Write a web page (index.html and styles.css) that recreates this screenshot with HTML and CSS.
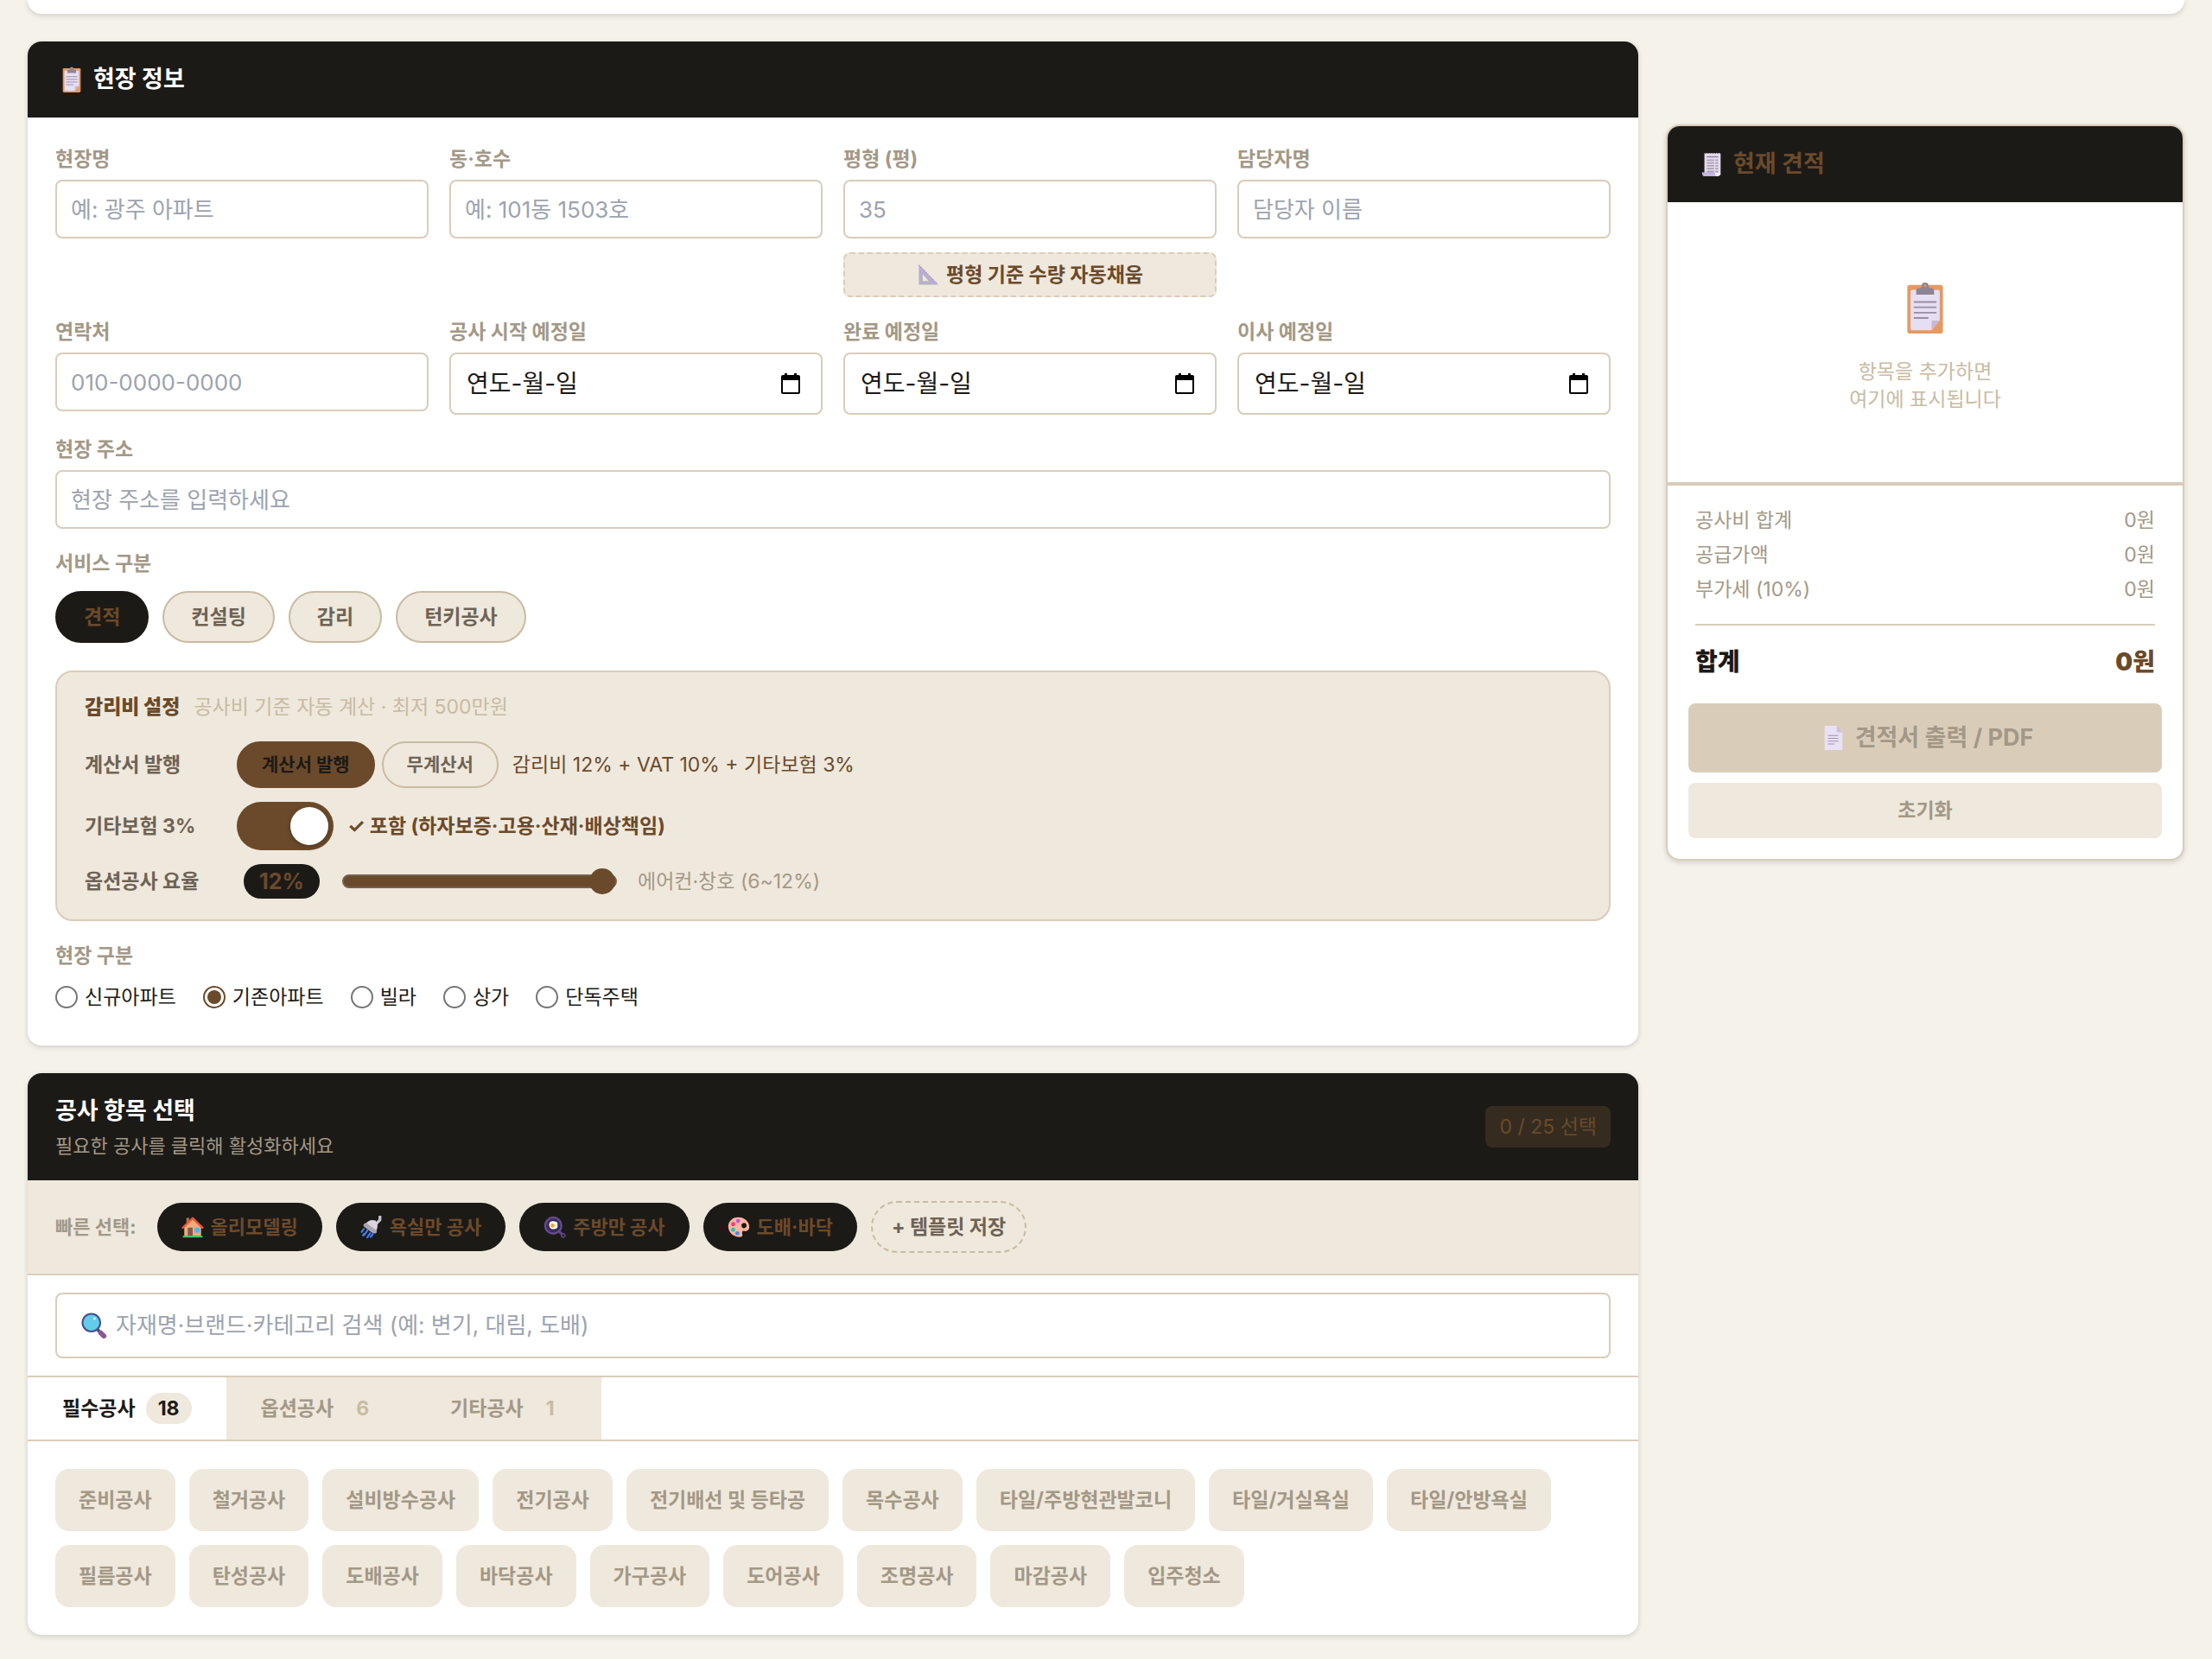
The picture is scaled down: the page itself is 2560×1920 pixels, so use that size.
FILE: index.html
```html
<!DOCTYPE html>
<html lang="ko">

<head>
    <meta charset="UTF-8" />
    <meta name="viewport" content="width=device-width, initial-scale=1.0" />
    <title>현장 견적</title>
    <link rel="stylesheet" href="styles.css">
</head>

<body>
    <!-- shared icons -->
    <svg class="icon-defs" aria-hidden="true">
        <symbol id="i-clipboard" viewBox="0 0 32 32">
            <rect x="5" y="2" width="22" height="30" rx="1.5" fill="#e59a62" />
            <path d="M7 6a1 1 0 0 1 1-1h16a1 1 0 0 1 1 1v18l-5 6H8a1 1 0 0 1-1-1z" fill="#e6def2" />
            <path d="M20 24h5l-5 6z" fill="#c5b9d3" />
            <path d="M10.500 8V5.500q0-1 1-1.500h1.500q1-.5 1-2t2-1.500 2 1.500 1 2h1.500q1 .5 1 1.500V8z" fill="#8d8494" />
            <circle cx="16" cy="2.500" r=".8" fill="#e59a62" />
            <path d="M9 12.500h14M9 15.800h14M9 19.100h14M9 22.400h9" stroke="#998da3" stroke-width="1" />
        </symbol>
        <symbol id="i-receipt" viewBox="0 0 32 32">
            <path d="M7 2l1.500 1 1.500-1 1.500 1L13 2l1.500 1L16 2l1.500 1L19 2l1.500 1L22 2l1.500 1L25 2l2 1v26l-3 2H10L7 27z" fill="#e4dcee" />
            <path d="M4 26h17v3q0 2 2 2H8q-4 0-4-5z" fill="#c5b5e0" />
            <path d="M20 26q0 5 3 5 3.500-.5 4-4z" fill="#f1ecf8" />
            <path d="M10 7h14" stroke="#8f8699" stroke-width="1.600" />
            <path d="M10 11h9M20.500 11H24M10 14.500h9M20.500 14.500H24M10 18h9M20.500 18H24M10 21.500h9M20.500 21.500H24M10 25h9M20.500 25H24" stroke="#aaa1b3" stroke-width="2" />
        </symbol>
        <symbol id="i-ruler" viewBox="0 0 32 32">
            <path fill-rule="evenodd" d="M3 2l27 28H3zM8.500 15.500V25H17z" fill="#b8b0ca" />
            <path d="M3 2l27 28" stroke="#9d86dc" stroke-width="1.500" stroke-dasharray="2 1.500" />
        </symbol>
        <symbol id="i-page" viewBox="0 0 32 32">
            <path d="M5 2a1 1 0 0 1 1-1h14l7 8v21a1 1 0 0 1-1 1H6a1 1 0 0 1-1-1z" fill="#e9e1f4" />
            <path d="M20 1l7 8h-6a1 1 0 0 1-1-1z" fill="#cbc0d8" />
            <path d="M9 13h13M9 16.500h13M9 20h13M9 23.500h8" stroke="#a094ad" stroke-width="1.200" />
        </symbol>
        <symbol id="i-house" viewBox="0 0 32 32">
            <path d="M7 3h4v9H7z" fill="#a5744e" />
            <path d="M4 15L16 4l12 11v14H4z" fill="#e9ae79" />
            <path d="M2 17L16 3.500 30 17" fill="none" stroke="#ee5638" stroke-width="3" stroke-linecap="round" stroke-linejoin="round" />
            <path d="M9 17h7v12H9z" fill="#81594c" />
            <rect x="19" y="17" width="7" height="7" fill="#4bb7f1" />
            <path d="M2 28.500h28V31H2z" fill="#45c867" />
        </symbol>
        <symbol id="i-shower" viewBox="0 0 32 32">
            <path d="M22 12l6-6V1" fill="none" stroke="#c9c3ce" stroke-width="4" stroke-linejoin="round" stroke-linecap="round" />
            <path d="M7 12q6-8 15-5 5 7 0 16z" fill="#d9d4dd" />
            <path d="M5 12q2-3 6 0l11 8q3 3 0 5-3 1-7-2l-8-6q-4-3-2-5z" fill="#aaa3b0" />
            <path d="M5 19l-3 4M10 21l-4 6M14 25l-4 6M5 26l-1 2M18 26l-3 4" stroke="#3e7df2" stroke-width="2.800" stroke-linecap="round" />
        </symbol>
        <symbol id="i-pan" viewBox="0 0 32 32">
            <path d="M22 22l5 5" stroke="#5c4485" stroke-width="4" />
            <circle cx="14" cy="14" r="13" fill="#644b8c" />
            <circle cx="14" cy="14" r="10" fill="#3c2b58" />
            <path d="M8 12q1-5 7-4 6 0 5 5 1 6-5 6-7 1-7-7z" fill="#fff" />
            <circle cx="13" cy="14" r="3" fill="#f9a825" />
            <circle cx="28" cy="28" r="2.500" fill="none" stroke="#5c4485" stroke-width="2" />
        </symbol>
        <symbol id="i-palette" viewBox="0 0 32 32">
            <path fill-rule="evenodd" d="M15 2C7 2 1 8 1 15c0 8 6 14 14 15 5 1 7-1 6-4-1-4 1-5 4-4 3 0 6-2 6-6C31 8 24 2 15 2zm12 11a3.500 3.500 0 1 1-7 2 3.500 3.500 0 0 1 7-2z" fill="#ffb4a0" />
            <circle cx="15" cy="7.500" r="3" fill="#c653e0" />
            <circle cx="8" cy="12" r="3" fill="#ef3e78" />
            <circle cx="8" cy="20" r="3" fill="#35b8b8" />
            <circle cx="14" cy="25" r="3" fill="#3b8ff0" />
        </symbol>
        <symbol id="i-search" viewBox="0 0 32 32">
            <path d="M20 21l3 3" stroke="#4c4a86" stroke-width="4" />
            <path d="M24 25l4 4" stroke="#8b5793" stroke-width="6" stroke-linecap="round" />
            <circle cx="12.500" cy="12.500" r="11" fill="#62cdea" stroke="#46508e" stroke-width="2.200" />
            <circle cx="16.500" cy="7.500" r="1.800" fill="#b4ebf8" />
        </symbol>
        <symbol id="i-calendar" viewBox="0 0 22 24">
            <path fill-rule="evenodd" d="M4 0h3v2h8V0h3v2h2a2 2 0 0 1 2 2v18a2 2 0 0 1-2 2H2a2 2 0 0 1-2-2V4a2 2 0 0 1 2-2h2zM2 8v14h18V8z" fill="#000" />
        </symbol>
    </svg>

    <div class="page">
        <div class="top-card"></div>

        <div class="layout">
            <main class="main">
                <section class="card">
                    <header class="card-header">
                        <svg class="icon-lg"><use href="#i-clipboard" /></svg>
                        <h2>현장 정보</h2>
                    </header>
                    <div class="card-body">
                        <div class="form-grid">
                            <div class="field">
                                <label for="siteName">현장명</label>
                                <input type="text" id="siteName" placeholder="예: 광주 아파트" />
                            </div>
                            <div class="field">
                                <label for="unit">동·호수</label>
                                <input type="text" id="unit" placeholder="예: 101동 1503호" />
                            </div>
                            <div class="field">
                                <label for="area">평형 (평)</label>
                                <input type="text" id="area" placeholder="35" />
                                <button class="autofill"><svg class="icon-sm"><use href="#i-ruler" /></svg>평형 기준 수량 자동채움</button>
                            </div>
                            <div class="field">
                                <label for="manager">담당자명</label>
                                <input type="text" id="manager" placeholder="담당자 이름" />
                            </div>
                            <div class="field">
                                <label for="phone">연락처</label>
                                <input type="text" id="phone" placeholder="010-0000-0000" />
                            </div>
                            <div class="field">
                                <label for="startDate">공사 시작 예정일</label>
                                <div class="date-box">
                                    <input type="text" id="startDate" value="연도-월-일" />
                                    <button aria-label="날짜 선택"><svg class="icon-cal"><use href="#i-calendar" /></svg></button>
                                </div>
                            </div>
                            <div class="field">
                                <label for="endDate">완료 예정일</label>
                                <div class="date-box">
                                    <input type="text" id="endDate" value="연도-월-일" />
                                    <button aria-label="날짜 선택"><svg class="icon-cal"><use href="#i-calendar" /></svg></button>
                                </div>
                            </div>
                            <div class="field">
                                <label for="moveDate">이사 예정일</label>
                                <div class="date-box">
                                    <input type="text" id="moveDate" value="연도-월-일" />
                                    <button aria-label="날짜 선택"><svg class="icon-cal"><use href="#i-calendar" /></svg></button>
                                </div>
                            </div>
                            <div class="field full">
                                <label for="address">현장 주소</label>
                                <input type="text" id="address" placeholder="현장 주소를 입력하세요" />
                            </div>
                        </div>

                        <div class="group">
                            <p class="group-label">서비스 구분</p>
                            <div class="pills">
                                <button class="pill active">견적</button>
                                <button class="pill">컨설팅</button>
                                <button class="pill">감리</button>
                                <button class="pill">턴키공사</button>
                            </div>
                        </div>

                        <div class="fee-box">
                            <div class="fee-title"><b>감리비 설정</b><span>공사비 기준 자동 계산 · 최저 500만원</span></div>
                            <div class="fee-row">
                                <span class="fee-label">계산서 발행</span>
                                <div class="fee-pills">
                                    <button class="fee-pill on">계산서 발행</button>
                                    <button class="fee-pill">무계산서</button>
                                </div>
                                <span class="fee-text">감리비 12% + VAT 10% + 기타보험 3%</span>
                            </div>
                            <div class="fee-row">
                                <label class="fee-label" for="insurance">기타보험 3%</label>
                                <input type="checkbox" id="insurance" class="toggle" checked />
                                <span class="fee-text strong">✓ 포함 (하자보증·고용·산재·배상책임)</span>
                            </div>
                            <div class="fee-row">
                                <label class="fee-label" for="rate">옵션공사 요율</label>
                                <span class="rate">12%</span>
                                <input type="range" id="rate" min="6" max="12" value="12" />
                                <span class="fee-text muted">에어컨·창호 (6~12%)</span>
                            </div>
                        </div>

                        <div class="group">
                            <p class="group-label">현장 구분</p>
                            <div class="radios">
                                <label><input type="radio" name="siteType" />신규아파트</label>
                                <label><input type="radio" name="siteType" checked />기존아파트</label>
                                <label><input type="radio" name="siteType" />빌라</label>
                                <label><input type="radio" name="siteType" />상가</label>
                                <label><input type="radio" name="siteType" />단독주택</label>
                            </div>
                        </div>
                    </div>
                </section>

                <section class="card">
                    <header class="items-header">
                        <div>
                            <h2>공사 항목 선택</h2>
                            <p>필요한 공사를 클릭해 활성화하세요</p>
                        </div>
                        <span class="counter">0 / 25 선택</span>
                    </header>
                    <div class="quick">
                        <span class="quick-label">빠른 선택:</span>
                        <button class="quick-btn"><svg class="icon-sm"><use href="#i-house" /></svg>올리모델링</button>
                        <button class="quick-btn"><svg class="icon-sm"><use href="#i-shower" /></svg>욕실만 공사</button>
                        <button class="quick-btn"><svg class="icon-sm"><use href="#i-pan" /></svg>주방만 공사</button>
                        <button class="quick-btn"><svg class="icon-sm"><use href="#i-palette" /></svg>도배·바닥</button>
                        <button class="save-btn">+ 템플릿 저장</button>
                    </div>
                    <div class="search">
                        <div class="search-box">
                            <svg class="icon-search"><use href="#i-search" /></svg>
                            <input type="text" aria-label="자재 검색" placeholder="자재명·브랜드·카테고리 검색 (예: 변기, 대림, 도배)" />
                        </div>
                    </div>
                    <div class="tabs">
                        <button class="tab active">필수공사<span>18</span></button>
                        <button class="tab">옵션공사<span>6</span></button>
                        <button class="tab">기타공사<span>1</span></button>
                    </div>
                    <div class="chips">
                        <button>준비공사</button>
                        <button>철거공사</button>
                        <button>설비방수공사</button>
                        <button>전기공사</button>
                        <button>전기배선 및 등타공</button>
                        <button>목수공사</button>
                        <button>타일/주방현관발코니</button>
                        <button>타일/거실욕실</button>
                        <button>타일/안방욕실</button>
                        <button>필름공사</button>
                        <button>탄성공사</button>
                        <button>도배공사</button>
                        <button>바닥공사</button>
                        <button>가구공사</button>
                        <button>도어공사</button>
                        <button>조명공사</button>
                        <button>마감공사</button>
                        <button>입주청소</button>
                    </div>
                </section>
            </main>

            <aside class="estimate">
                <header class="card-header">
                    <svg class="icon-lg"><use href="#i-receipt" /></svg>
                    <h2>현재 견적</h2>
                </header>
                <div class="empty">
                    <svg class="icon-xl"><use href="#i-clipboard" /></svg>
                    <p>항목을 추가하면<br>여기에 표시됩니다</p>
                </div>
                <div class="totals">
                    <div class="total-row"><span>공사비 합계</span><span>0원</span></div>
                    <div class="total-row"><span>공급가액</span><span>0원</span></div>
                    <div class="total-row"><span>부가세 (10%)</span><span>0원</span></div>
                    <div class="grand"><span>합계</span><span class="sum">0원</span></div>
                </div>
                <div class="actions">
                    <button class="print-btn"><svg class="icon-lg"><use href="#i-page" /></svg>견적서 출력 / PDF</button>
                    <button class="reset-btn">초기화</button>
                </div>
            </aside>
        </div>
    </div>
</body>

</html>
```
FILE: styles.css
```css
* {
    box-sizing: border-box;
}

body {
    margin: 0;
    font-family: Inter, "Noto Sans CJK KR", sans-serif;
    font-size: 23px;
    font-weight: 400;
    line-height: 32px;
    color: #1c1a16;
    background: #f5f2ea;
}

h2,
p {
    margin: 0;
}

h2 {
    font-size: 27px;
    font-weight: 700;
    line-height: 40px;
}

button,
input {
    font: inherit;
    color: inherit;
    margin: 0;
}

button {
    padding: 0;
    border: none;
    background: none;
    font-weight: 700;
    white-space: nowrap;
    cursor: pointer;
}

/* icons */
.icon-defs {
    display: none;
}

.icon-lg {
    width: 38px;
    height: 30px;
    flex: none;
}

.icon-sm {
    width: 26px;
    height: 26px;
    flex: none;
}

.icon-xl {
    width: 64px;
    height: 60px;
}

.icon-search {
    width: 30px;
    height: 30px;
    flex: none;
}

.icon-cal {
    display: block;
    width: 22px;
    height: 24px;
}

/* layout */
.page {
    padding: 0 32px 28px;
}

.top-card {
    height: 16px;
    margin-bottom: 32px;
    background: #fff;
    border-radius: 0 0 16px 16px;
    box-shadow: 0 2px 6px rgba(0, 0, 0, 0.15);
}

.layout {
    display: grid;
    grid-template-columns: 1fr 600px;
    gap: 32px;
    align-items: start;
}

.main {
    display: flex;
    flex-direction: column;
    gap: 32px;
    min-width: 0;
}

.card {
    background: #fff;
    border-radius: 16px;
    overflow: hidden;
    box-shadow: 0 2px 6px rgba(0, 0, 0, 0.15);
}

.card-header {
    display: flex;
    align-items: center;
    gap: 6px;
    padding: 24px 32px;
    color: #fff;
    background: #1c1a16;
}

.card-body {
    padding: 32px 32px 40px;
}

/* site form */
.form-grid {
    display: grid;
    grid-template-columns: repeat(4, minmax(0, 1fr));
    gap: 24px;
    align-items: start;
}

.field {
    display: flex;
    flex-direction: column;
    gap: 8px;
}

.field.full {
    grid-column: 1 / -1;
}

.field label,
.group-label {
    font-weight: 700;
    color: #a39886;
}

.field > input,
.date-box {
    width: 100%;
    height: 68px;
    padding: 0 16px;
    font-size: 26px;
    background: #fff;
    border: 2px solid #d9cdba;
    border-radius: 8px;
}

input::placeholder {
    color: #9ca3af;
    opacity: 1;
}

.date-box {
    display: flex;
    align-items: center;
    height: 72px;
    padding: 0 24px 0 18px;
    font-size: 28px;
}

.date-box input {
    flex: 1;
    min-width: 0;
    padding: 0;
    border: none;
    background: none;
}

.autofill {
    display: flex;
    align-items: center;
    justify-content: center;
    gap: 8px;
    height: 52px;
    margin-top: 8px;
    color: #6b4a2b;
    background: #efe8dc;
    border: 2px dashed #d9cdba;
    border-radius: 8px;
}

.group {
    display: flex;
    flex-direction: column;
    gap: 16px;
    margin-top: 24px;
}

.pills {
    display: flex;
    gap: 16px;
}

.pill {
    height: 60px;
    padding: 0 31px;
    color: #6e6355;
    background: #efe8dc;
    border: 2px solid #c8bba3;
    border-radius: 30px;
}

.pill.active {
    color: #6b4a2b;
    background: #1c1a16;
    border-color: #1c1a16;
}

/* supervision fee */
.fee-box {
    display: flex;
    flex-direction: column;
    gap: 16px;
    margin-top: 32px;
    padding: 24px 32px;
    background: #efe8dc;
    border: 2px solid #d9cdba;
    border-radius: 20px;
}

.fee-title {
    display: flex;
    gap: 16px;
    margin-bottom: 8px;
    color: #c8bba3;
}

.fee-title b {
    font-weight: 900;
    color: #6b4a2b;
}

.fee-row {
    display: flex;
    align-items: center;
    gap: 16px;
}

.fee-label {
    width: 160px;
    font-weight: 700;
    color: #6e6355;
    white-space: nowrap;
}

.fee-pills {
    display: flex;
    gap: 8px;
}

.fee-pill {
    height: 54px;
    padding: 0 27px;
    font-size: 21px;
    color: #6e6355;
    border: 2px solid #c8bba3;
    border-radius: 27px;
}

.fee-pill.on {
    color: #1c1a16;
    background: #6b4a2b;
    border-color: #6b4a2b;
}

.fee-text {
    color: #6b4a2b;
}

.fee-text.strong {
    font-weight: 700;
}

.fee-text.muted {
    color: #a39886;
}

.toggle {
    appearance: none;
    display: flex;
    width: 112px;
    height: 56px;
    padding: 6px;
    background: #c8bba3;
    border-radius: 28px;
}

.toggle::before {
    content: "";
    width: 44px;
    height: 44px;
    background: #fff;
    border-radius: 50%;
    box-shadow: 0 2px 6px rgba(0, 0, 0, 0.25);
}

.toggle:checked {
    justify-content: flex-end;
    background: #6b4a2b;
}

.rate {
    width: 88px;
    height: 40px;
    margin: 0 10px 0 8px;
    font-size: 25px;
    font-weight: 700;
    line-height: 40px;
    text-align: center;
    color: #6b4a2b;
    background: #1c1a16;
    border-radius: 20px;
}

input[type="range"] {
    appearance: none;
    width: 318px;
    height: 16px;
    margin-right: 8px;
    background: #6b4a2b;
    border: 2px solid #75614f;
    border-radius: 8px;
}

input[type="range"]::-webkit-slider-thumb {
    appearance: none;
    width: 30px;
    height: 30px;
    background: #6b4a2b;
    border-radius: 50%;
}

.radios {
    display: flex;
    gap: 31px;
}

.radios label {
    display: flex;
    align-items: center;
    gap: 8px;
}

.radios input {
    appearance: none;
    width: 26px;
    height: 26px;
    border: 2px solid #767676;
    border-radius: 50%;
}

.radios input:checked {
    padding: 3px;
    border-color: #6b4a2b;
    background: #6b4a2b content-box;
}

/* work items */
.items-header {
    display: flex;
    align-items: center;
    justify-content: space-between;
    padding: 24px 32px;
    color: #fff;
    background: #1c1a16;
}

.items-header p {
    margin-top: 4px;
    font-size: 22px;
    color: #a39886;
}

.counter {
    padding: 8px 16px;
    color: #6b4a2b;
    background: #352c1f;
    border-radius: 8px;
}

.quick {
    display: flex;
    align-items: center;
    gap: 16px;
    padding: 24px 32px;
    background: #efe8dc;
    border-bottom: 2px solid #d9cdba;
}

.quick-label {
    margin-right: 8px;
    font-size: 22px;
    font-weight: 700;
    color: #a39886;
}

.quick-btn {
    display: flex;
    align-items: center;
    gap: 8px;
    height: 56px;
    padding: 0 28px;
    font-size: 22px;
    color: #6b4a2b;
    background: #1c1a16;
    border-radius: 28px;
}

.save-btn {
    height: 60px;
    padding: 0 22px;
    color: #6e6355;
    border: 2px dashed #c8bba3;
    border-radius: 30px;
}

.search {
    padding: 20px 32px;
    border-bottom: 2px solid #d9cdba;
}

.search-box {
    display: flex;
    align-items: center;
    gap: 10px;
    height: 76px;
    padding: 0 28px;
    border: 2px solid #d9cdba;
    border-radius: 8px;
}

.search-box input {
    flex: 1;
    padding: 0;
    font-size: 26px;
    border: none;
    background: none;
}

.tabs {
    display: flex;
    border-bottom: 2px solid #d9cdba;
}

.tab {
    display: flex;
    align-items: center;
    gap: 12px;
    height: 72px;
    padding: 0 40px;
    color: #a39886;
    background: #efe8dc;
}

.tab span {
    padding: 2px 14px;
    color: #c8bba3;
    border-radius: 18px;
}

.tab.active {
    color: #1c1a16;
    background: #fff;
}

.tab.active span {
    color: #1c1a16;
    background: #efe8dc;
}

.chips {
    display: flex;
    flex-wrap: wrap;
    gap: 16px;
    padding: 32px;
}

.chips button {
    height: 72px;
    padding: 0 27px;
    color: #a39886;
    background: #efe8dc;
    border-radius: 16px;
}

/* estimate panel */
.estimate {
    margin-top: 96px;
    background: #fff;
    border: 2px solid #d9cdba;
    border-radius: 16px;
    overflow: hidden;
    box-shadow: 0 2px 6px rgba(0, 0, 0, 0.15);
}

.estimate .card-header {
    color: #6b4a2b;
}

.empty {
    display: flex;
    flex-direction: column;
    align-items: center;
    gap: 28px;
    padding: 92px 32px 80px;
    text-align: center;
    color: #c8bba3;
}

.totals {
    padding: 24px 32px 20px;
    color: #a39886;
    border-top: 4px solid #d9cdba;
}

.total-row {
    display: flex;
    justify-content: space-between;
    margin-bottom: 8px;
}

.grand {
    display: flex;
    justify-content: space-between;
    margin-top: 24px;
    padding-top: 24px;
    font-size: 28px;
    font-weight: 900;
    line-height: 36px;
    color: #1c1a16;
    border-top: 2px solid #d9cdba;
}

.sum {
    color: #6b4a2b;
}

.actions {
    display: flex;
    flex-direction: column;
    gap: 12px;
    padding: 10px 24px 24px;
}

.print-btn {
    display: flex;
    align-items: center;
    justify-content: center;
    gap: 6px;
    height: 80px;
    font-size: 27px;
    color: #a39886;
    background: #d9cdba;
    border-radius: 8px;
}

.reset-btn {
    height: 64px;
    color: #a39886;
    background: #efe8dc;
    border-radius: 8px;
}
```
